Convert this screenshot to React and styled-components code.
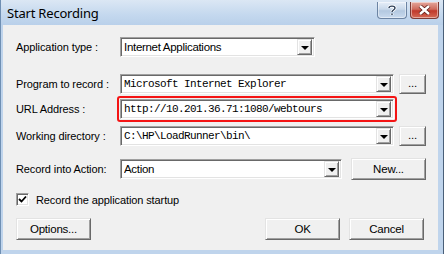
import styled, { createGlobalStyle } from "styled-components";

const Global = createGlobalStyle`
  html, body {
    margin: 0;
    padding: 0;
    background: #f0f0f0;
  }
`;

const Window = styled.div`
  width: 444px;
  height: 254px;
  box-sizing: border-box;
  display: flex;
  flex-direction: column;
  background: #bfd4ec;
  border-left: 1px solid #6f8fb3;
  border-right: 1px solid #4a5f78;
  font-family: "Liberation Sans", Arial, sans-serif;
  overflow: hidden;
`;

const TitleBar = styled.div`
  height: 25px;
  flex: none;
  display: flex;
  align-items: center;
  padding: 0 4px 0 6px;
  background: linear-gradient(#dbe7f4, #c4d8ee 60%, #b9d0ea);
`;

const Title = styled.div`
  flex: 1;
  font-family: "Noto Sans", "Open Sans", sans-serif;
  font-size: 13px;
  letter-spacing: -0.2px;
  color: #000;
  padding-top: 1px;
`;

const CaptionButton = styled.div`
  width: ${(p) => (p.close ? 29 : 30)}px;
  height: 17px;
  margin-left: ${(p) => (p.close ? 3 : 0)}px;
  margin-bottom: 5px;
  box-sizing: border-box;
  border: 1px solid ${(p) => (p.close ? "#7d3a34" : "#6c84a3")};
  border-top: none;
  border-radius: 0 0 4px 4px;
  background: ${(p) =>
    p.close
      ? "linear-gradient(#e4a89d, #cf6b5c 45%, #c0392b 55%, #d46a55)"
      : "linear-gradient(#e6eef8, #c8d8ea 45%, #b3c8e0 55%, #c9daee)"};
  display: flex;
  align-items: center;
  justify-content: center;
  box-shadow: inset 0 0 0 1px rgba(255, 255, 255, 0.45);
`;

const Body = styled.div`
  flex: 1;
  background: #f0f0f0;
  margin: 0 5px 4px 2px;
  padding: 12px 0 0 13px;
  display: flex;
  flex-direction: column;
  font-size: 11px;
  color: #000;
`;

const Row = styled.div`
  display: flex;
  align-items: center;
  margin-top: ${(p) => p.top || 0}px;
  height: ${(p) => p.h || 20}px;
  padding-right: ${(p) => p.right || 0}px;
`;

const Label = styled.div`
  width: 104px;
  flex: none;
  letter-spacing: -0.1px;
`;

const Combo = styled.div`
  width: ${(p) => p.w}px;
  height: 20px;
  box-sizing: border-box;
  background: #fff;
  display: flex;
  align-items: center;
  border: 1px solid;
  border-color: #a0a0a0 #fff #fff #a0a0a0;
  box-shadow: inset 1px 1px #696969, inset -1px -1px #e3e3e3;
  padding: 2px 2px 2px 3px;
  flex: none;
`;

const Highlight = styled.div`
  margin-left: -3px;
  padding: 1px;
  border: 2px solid #f41414;
  border-radius: 3px;
  display: flex;
`;

const ComboText = styled.div`
  flex: 1;
  white-space: nowrap;
  overflow: hidden;
  font-family: ${(p) =>
    p.mono ? '"Liberation Mono", "Courier New", monospace' : '"Liberation Sans", Arial, sans-serif'};
  font-size: ${(p) => (p.mono ? "11px" : "11.5px")};
  letter-spacing: ${(p) => (p.mono ? "-0.6px" : "-0.3px")};
`;

const Raised = styled.div`
  box-sizing: border-box;
  background: #f0f0f0;
  border: 1px solid;
  border-color: #e3e3e3 #696969 #696969 #e3e3e3;
  box-shadow: inset 1px 1px #fff, inset -1px -1px #a0a0a0;
  display: flex;
  align-items: center;
  justify-content: center;
`;

const Arrow = styled(Raised)`
  width: 15px;
  height: 16px;
  flex: none;
  &::after {
    content: "";
    border-left: 4px solid transparent;
    border-right: 4px solid transparent;
    border-top: 4px solid #000;
    margin-top: 1px;
  }
`;

const Button = styled(Raised)`
  width: ${(p) => p.w}px;
  height: ${(p) => p.h || 22}px;
  margin-left: ${(p) => p.gap || 0}px;
  flex: none;
  font-size: 11.5px;
  letter-spacing: -0.2px;
  padding-bottom: ${(p) => (p.dots ? 3 : 0)}px;
`;

const Check = styled.div`
  width: 13px;
  height: 13px;
  box-sizing: border-box;
  background: #fff;
  border: 1px solid;
  border-color: #a0a0a0 #fff #fff #a0a0a0;
  box-shadow: inset 1px 1px #696969, inset -1px -1px #e3e3e3;
  margin: 0 7px 0 0;
  display: flex;
  align-items: center;
  justify-content: center;
`;

const CheckLabel = styled.span`
  letter-spacing: -0.1px;
`;

const Spacer = styled.div`
  flex: 1;
`;

function Dropdown({ w, mono, children, highlight }) {
  const box = (
    <Combo w={w}>
      <ComboText mono={mono}>{children}</ComboText>
      <Arrow />
    </Combo>
  );
  return highlight ? <Highlight>{box}</Highlight> : box;
}

export default function App() {
  return (
    <>
      <Global />
      <Window>
        <TitleBar>
          <Title>Start Recording</Title>
          <CaptionButton>
            <svg width="10" height="12" viewBox="0 0 10 12">
              <path
                d="M2 4 C2 1.5 8 1.5 8 4 C8 6 5 6 5 8 M5 9.5 V11"
                fill="none"
                stroke="#fff"
                strokeWidth="3"
              />
              <path
                d="M2 4 C2 1.5 8 1.5 8 4 C8 6 5 6 5 8 M5 9.5 V11"
                fill="none"
                stroke="#2b3d55"
                strokeWidth="1.4"
              />
            </svg>
          </CaptionButton>
          <CaptionButton close>
            <svg width="13" height="10" viewBox="0 0 13 10">
              <path d="M2 1 L11 9 M11 1 L2 9" stroke="#5a1a14" strokeWidth="4" />
              <path d="M2 1 L11 9 M11 1 L2 9" stroke="#fff" strokeWidth="2.4" />
            </svg>
          </CaptionButton>
        </TitleBar>
        <Body>
          <Row>
            <Label>Application type :</Label>
            <Dropdown w={195}>Internet Applications</Dropdown>
          </Row>
          <Row top={17}>
            <Label>Program to record :</Label>
            <Dropdown w={274} mono>
              Microsoft Internet Explorer
            </Dropdown>
            <Button w={27} h={20} gap={5} dots>
              ...
            </Button>
          </Row>
          <Row top={4} h={22}>
            <Label>URL Address :</Label>
            <Dropdown w={274} mono highlight>
              http://10.201.36.71:1080/webtours
            </Dropdown>
          </Row>
          <Row top={6}>
            <Label>Working directory :</Label>
            <Dropdown w={274} mono>
              C:\HP\LoadRunner\bin\
            </Dropdown>
            <Button w={27} h={20} gap={5} dots>
              ...
            </Button>
          </Row>
          <Row top={12} h={22}>
            <Label>Record into Action:</Label>
            <Dropdown w={222}>Action</Dropdown>
            <Button w={75} gap={9}>
              New...
            </Button>
          </Row>
          <Row top={13} h={13}>
            <Check>
              <svg width="9" height="9" viewBox="0 0 9 9">
                <path d="M1 4 L3.5 6.5 L8 1.5" fill="none" stroke="#000" strokeWidth="1.8" />
              </svg>
            </Check>
            <CheckLabel>Record the application startup</CheckLabel>
          </Row>
          <Row top={12} h={22} right={14}>
            <Button w={75}>Options...</Button>
            <Spacer />
            <Button w={75}>OK</Button>
            <Button w={75} gap={9}>
              Cancel
            </Button>
          </Row>
        </Body>
      </Window>
    </>
  );
}
